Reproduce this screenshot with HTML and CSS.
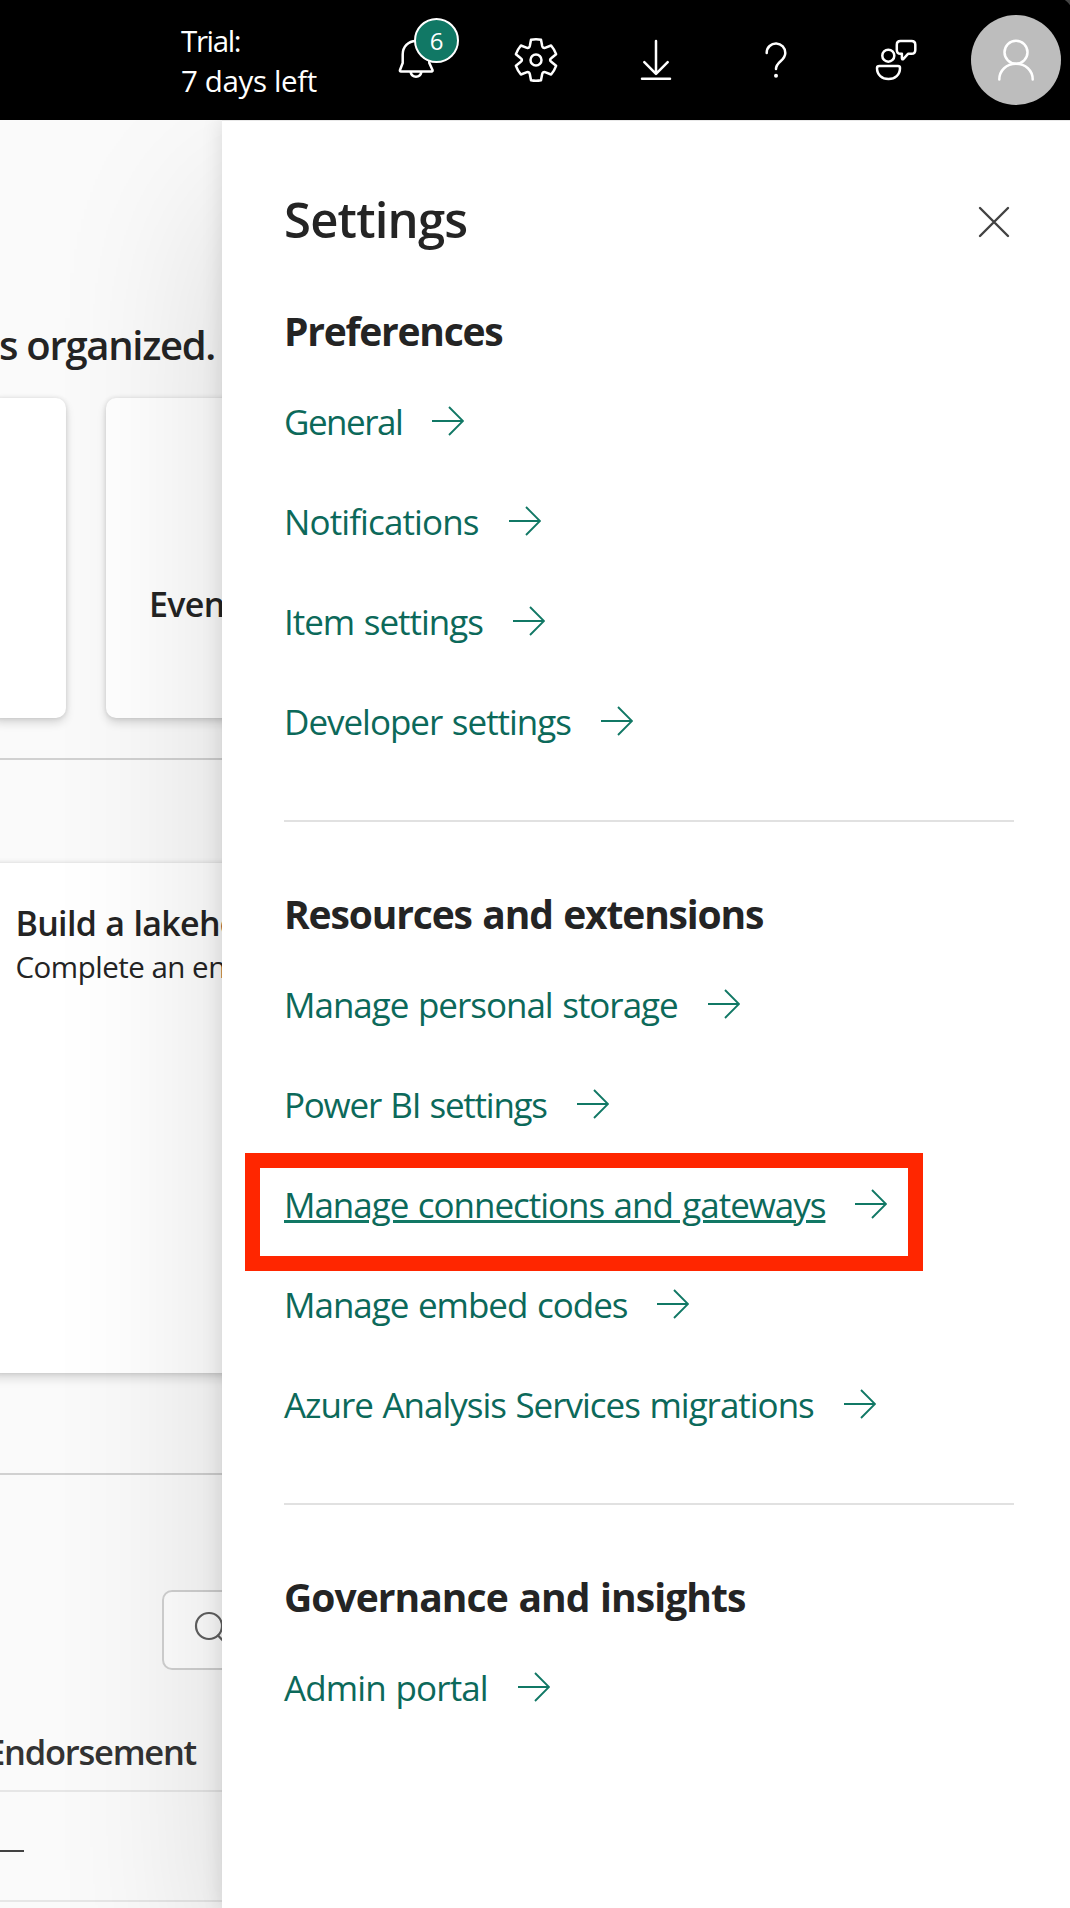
FILE: index.html
```html
<!DOCTYPE html>
<html lang="en">
<head>
<meta charset="utf-8">
<title>Settings</title>
<link rel="stylesheet" href="styles.css">
</head>
<body>
<header class="topbar">
  <div class="trial"><span class="trial-label">Trial:</span><span class="trial-days">7 days left</span></div>
  <nav class="actions">
    <button class="action" aria-label="Notifications">
      <svg viewBox="0 0 48 48"><path d="M24 5C16 5 10.700 11 10.700 18.500V27L8 34q-.5 1.500 1 1.500H39.500q1.500 0 1-1.500L37.300 27V18.500C37.300 11 32 5 24 5ZM18.500 36a5.700 6.300 0 0 0 11 0"/></svg>
      <span class="badge">6</span>
    </button>
    <button class="action" aria-label="Settings">
      <svg viewBox="-24 -24 48 48"><path d="M-5-20.300Q0-21.300 5-20.300L6.200-14Q6.800-11.600 9-12.200L15.100-14.500Q18.400-10.600 20.100-5.800L15.200-1.700Q13 0 15.200 1.700L20.100 5.800Q18.400 10.600 15.100 14.500L9 12.200Q6.800 11.600 6.200 14L5 20.300Q0 21.300-5 20.300L-6.200 14Q-6.800 11.600-9 12.200L-15.100 14.500Q-18.400 10.600-20.100 5.800L-15.200 1.700Q-13 0-15.200-1.700L-20.100-5.800Q-18.400-10.600-15.100-14.500L-9-12.200Q-6.800-11.600-6.200-14Z"/><circle r="5.500"/></svg>
    </button>
    <button class="action" aria-label="Download">
      <svg viewBox="0 0 48 48"><path d="M24 5V37.500M12.300 26.200L24 37.900L35.700 26.200M10 42.700H38"/></svg>
    </button>
    <button class="action" aria-label="Help">
      <svg viewBox="0 0 48 48"><path d="M14.700 17V16.500A9.300 9.300 0 0 1 33.300 17C33.300 25 24 25.500 24 33"/><circle class="dot" cx="24" cy="39.700" r="2"/></svg>
    </button>
    <button class="action" aria-label="Feedback">
      <svg viewBox="0 0 48 48"><circle cx="16.300" cy="19.700" r="6"/><path d="M7.500 30H26q2 0 2 2C28 39 23 43 16.500 43S5 39 5 32q0-2 2.500-2ZM28.500 5h11q3.800 0 3.800 3.800v5.200q0 3.800-3.800 3.800h-3.500l-4.800 5.300q-1.300.8-1.300-1V17.800h-1.400q-3.700 0-3.700-3.800V8.800q0-3.800 3.700-3.800Z"/></svg>
    </button>
    <button class="action" aria-label="Account">
      <span class="avatar"><svg viewBox="0 0 48 48"><circle cx="24" cy="16.300" r="11.500"/><path d="M7.300 43.500C7.300 34.500 14.500 27.800 24 27.800S40.700 34.500 40.700 43.500"/></svg></span>
    </button>
  </nav>
</header>
<main class="page">
  <section class="workspace">
    <h2 class="tagline"><span>s organized.</span></h2>
    <div class="cards">
      <article class="card card-first"></article>
      <article class="card card-second"><h3 class="card-name">Even</h3></article>
    </div>
    <hr class="rule">
    <article class="learn">
      <h3 class="learn-title">Build a lakehouse</h3>
      <p class="learn-text">Complete an en</p>
    </article>
    <hr class="rule rule-low">
    <div class="search"><svg viewBox="0 0 36 36"><circle cx="16" cy="15" r="13"/><path d="M25 24.500L34 34"/></svg></div>
    <div class="table">
      <div class="table-head"><span>Endorsement</span></div>
      <div class="table-row"><span class="dash"></span></div>
      <div class="table-row"></div>
    </div>
  </section>
  <aside class="panel">
    <div class="panel-head">
      <h1 class="panel-title">Settings</h1>
      <svg class="close" viewBox="0 0 32 32"><path d="M2 2L30 30M30 2L2 30"/></svg>
    </div>
    <section class="group">
      <h2 class="group-title preferences">Preferences</h2>
      <a class="link general"><span>General</span><svg viewBox="0 0 32 30"><path d="M0 15H31M17 1L31 15L17 29"/></svg></a>
      <a class="link notifications"><span>Notifications</span><svg viewBox="0 0 32 30"><path d="M0 15H31M17 1L31 15L17 29"/></svg></a>
      <a class="link"><span>Item settings</span><svg viewBox="0 0 32 30"><path d="M0 15H31M17 1L31 15L17 29"/></svg></a>
      <a class="link"><span>Developer settings</span><svg viewBox="0 0 32 30"><path d="M0 15H31M17 1L31 15L17 29"/></svg></a>
    </section>
    <section class="group">
      <h2 class="group-title resources">Resources and extensions</h2>
      <a class="link"><span>Manage personal storage</span><svg viewBox="0 0 32 30"><path d="M0 15H31M17 1L31 15L17 29"/></svg></a>
      <a class="link power-bi"><span>Power BI settings</span><svg viewBox="0 0 32 30"><path d="M0 15H31M17 1L31 15L17 29"/></svg></a>
      <a class="link link-marked"><span>Manage connections and gateways</span><svg viewBox="0 0 32 30"><path d="M0 15H31M17 1L31 15L17 29"/></svg></a>
      <a class="link"><span>Manage embed codes</span><svg viewBox="0 0 32 30"><path d="M0 15H31M17 1L31 15L17 29"/></svg></a>
      <a class="link"><span>Azure Analysis Services migrations</span><svg viewBox="0 0 32 30"><path d="M0 15H31M17 1L31 15L17 29"/></svg></a>
    </section>
    <section class="group">
      <h2 class="group-title governance">Governance and insights</h2>
      <a class="link admin"><span>Admin portal</span><svg viewBox="0 0 32 30"><path d="M0 15H31M17 1L31 15L17 29"/></svg></a>
    </section>
  </aside>
</main>
</body>
</html>
```
FILE: styles.css
```css
*, *::before, *::after { box-sizing: border-box; }
body {
  margin: 0;
  height: 1908px;
  overflow: hidden;
  display: flex;
  flex-direction: column;
  background: #fafafa;
  color: #242424;
  font-family: "Open Sans", "Noto Sans", sans-serif;
}
h1, h2, h3, p { margin: 0; white-space: nowrap; }
svg { display: block; flex: none; fill: none; stroke: currentColor; stroke-linecap: round; stroke-linejoin: round; }

/* Top bar */
.topbar {
  position: relative;
  z-index: 2;
  flex: none;
  height: 120px;
  display: flex;
  align-items: center;
  justify-content: space-between;
  overflow: hidden;
  padding-left: 181px;
  background: radial-gradient(circle at 0 100%, #000 16px, #444 17px) top right / 14px 14px no-repeat, #000;
  color: #fff;
}
.trial { display: flex; flex-direction: column; padding-top: 2px; font-size: 29.5px; line-height: 40px; white-space: nowrap; }
.trial-label { letter-spacing: -1.35px; }
.trial-days { letter-spacing: -.37px; }
.actions { display: flex; margin-right: -6px; }
.action {
  position: relative;
  width: 120px;
  height: 120px;
  padding: 0;
  border: 0;
  background: none;
  color: inherit;
  font: inherit;
  display: flex;
  align-items: center;
  justify-content: center;
}
.action svg { width: 48px; height: 48px; stroke-width: 2.5; }
.action .dot { fill: currentColor; stroke: none; }
.badge {
  position: absolute;
  left: 58px;
  top: 18px;
  width: 45px;
  height: 45px;
  border: 2px solid #fff;
  border-radius: 50%;
  background: #117865;
  font-size: 24px;
  line-height: 42px;
  text-align: center;
}
.avatar { width: 90px; height: 90px; border-radius: 50%; background: #bdbdbd; display: flex; align-items: center; justify-content: center; }

/* Workspace behind the panel */
.page { flex: 1; min-height: 0; display: flex; }
.workspace { width: 222px; flex: none; overflow: hidden; padding-top: 197px; display: flex; flex-direction: column; }
.tagline { display: flex; justify-content: flex-end; flex: none; padding-right: 7px; font-size: 40px; line-height: 55px; font-weight: 600; letter-spacing: -1.3px; }
.cards { display: flex; gap: 40px; height: 320px; margin-top: 26px; flex: none; }
.card { flex: none; background: #fff; border-radius: 10px; box-shadow: 0 0 5px rgba(0, 0, 0, .12), 0 5px 10px rgba(0, 0, 0, .14); }
.card-first { width: 76px; margin-left: -10px; }
.card-second { width: 300px; padding: 182px 0 0 43px; }
.card-name, .learn-title { font-size: 34px; line-height: 48px; font-weight: 600; letter-spacing: -.7px; word-spacing: 1px; }
.rule { flex: none; height: 2px; margin: 40px 0 0; border: 0; background: #d1d1d1; }
.learn { flex: none; height: 510px; margin: 103px -10px 0; padding: 36px 0 0 25.5px; background: #fff; box-shadow: 0 0 5px rgba(0, 0, 0, .12), 0 5px 10px rgba(0, 0, 0, .14); }
.learn-text { font-size: 29.5px; line-height: 40px; letter-spacing: -.5px; }
.rule-low { margin-top: 100px; }
.search { flex: none; width: 300px; height: 80px; margin: 115px 0 0 162px; padding: 19px 29px; border: 2px solid #d1d1d1; border-radius: 10px; background: #fff; color: #616161; }
.search svg { width: 36px; height: 36px; stroke-width: 2.2; }
.table { display: flex; flex-direction: column; flex: none; margin-top: 57px; }
.table-head { height: 65px; display: flex; justify-content: flex-end; padding-right: 26px; border-bottom: 2px solid #e6e6e6; font-size: 34.5px; line-height: 50px; font-weight: 600; letter-spacing: -1.25px; color: #333; }
.table-row { height: 110px; display: flex; align-items: center; border-bottom: 2px solid #e6e6e6; padding-top: 10px; }
.dash { width: 24px; height: 2px; background: #424242; }

/* Settings panel */
.panel {
  position: relative;
  z-index: 1;
  flex: 1;
  min-width: 0;
  padding: 66px 56px 0 62px;
  background: #fff;
  border-top: 1px solid #e8e8e8;
  box-shadow: 0 0 20px rgba(0, 0, 0, .12), 0 80px 160px rgba(0, 0, 0, .14);
}
.panel-head { display: flex; justify-content: space-between; align-items: center; margin-bottom: 52px; padding-right: 4px; }
.panel-title { font-size: 49px; line-height: 64px; font-weight: 600; letter-spacing: -.8px; }
.close { width: 32px; height: 32px; margin-top: 6px; stroke: #424242; stroke-width: 2.4; }
.group { display: flex; flex-direction: column; align-items: stretch; }
.group + .group { margin-top: 49px; padding-top: 64px; border-top: 2px solid #e1e1e1; }
.group-title { margin-bottom: 12px; font-size: 39px; line-height: 56px; font-weight: 700; word-spacing: 1.5px; }
.preferences { letter-spacing: -1.26px; }
.resources { letter-spacing: -1.15px; }
.governance { letter-spacing: -.95px; }
.link { position: relative; display: flex; align-items: center; gap: 30px; height: 100px; font-size: 35px; letter-spacing: -1.02px; word-spacing: 1.5px; color: #0c695a; white-space: nowrap; }
.link span { padding-top: 1px; }
.link svg { width: 32px; height: 30px; stroke: #117865; stroke-width: 1.9; stroke-linecap: butt; stroke-linejoin: miter; }
.general { letter-spacing: -1.5px; }
.notifications { letter-spacing: -.88px; }
.power-bi { letter-spacing: -1.25px; }
.admin { letter-spacing: -.88px; }
.link-marked { letter-spacing: -1.04px; }
.link-marked span { text-decoration: underline; text-decoration-thickness: 3px; text-underline-offset: 2px; text-decoration-color: #117865; }
.link-marked::after { content: ""; position: absolute; left: -39px; top: -1px; width: 678px; height: 118px; border: 15px solid #ff2600; }
```
